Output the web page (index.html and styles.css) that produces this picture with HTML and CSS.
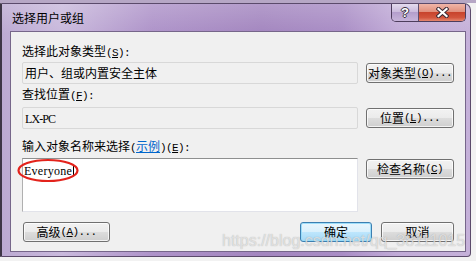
FILE: index.html
```html
<!DOCTYPE html>
<html lang="zh-CN">
<head>
<meta charset="utf-8">
<title>选择用户或组</title>
<link rel="stylesheet" href="styles.css">
</head>
<body>
<div class="window">
  <div class="titlebar">
    <div class="title">选择用户或组</div>
    <div class="caption">
      <div class="cb help"><span class="q">?</span></div>
      <div class="cb close">
        <svg width="13" height="11" viewBox="0 0 13 11">
          <path d="M2.5 2 L10.5 9 M10.5 2 L2.5 9" stroke="#3a2a36" stroke-width="4.2" stroke-linecap="square" fill="none"/>
          <path d="M2.5 2 L10.5 9 M10.5 2 L2.5 9" stroke="#ffffff" stroke-width="2.2" stroke-linecap="square" fill="none"/>
        </svg>
      </div>
    </div>
  </div>
  <div class="client">
    <div class="label">选择此对象类型<span class="h">(<u>S</u>):</span></div>
    <div class="row first">
      <div class="field ro">用户、组或内置安全主体</div>
      <div class="btn">对象类型<span class="h">(<u>O</u>)...</span></div>
    </div>
    <div class="label l2">查找位置<span class="h">(<u>F</u>):</span></div>
    <div class="row r2">
      <div class="field ro"><span class="mono pc">LX-PC</span></div>
      <div class="btn">位置<span class="h">(<u>L</u>)...</span></div>
    </div>
    <div class="label l3">输入对象名称来选择<span class="h">(</span><span class="link">示例</span><span class="h">)(<u>E</u>):</span></div>
    <div class="row r3">
      <div class="field edit"><span class="mono ev">Everyone</span><span class="caret"></span>
        <svg class="mark" width="66" height="28" viewBox="0 0 66 28">
          <ellipse cx="32" cy="13.5" rx="29.5" ry="10.5" fill="none" stroke="#e3231c" stroke-width="2.2"/>
        </svg>
      </div>
      <div class="btn">检查名称<span class="h">(<u>C</u>)</span></div>
    </div>
    <div class="bottom">
      <div class="btn adv">高级<span class="h">(<u>A</u>)...</span></div>
      <div class="btn ok">确定</div>
      <div class="btn cancel">取消</div>
    </div>
  </div>
</div>
<div class="watermark">https://blog.csdn.net/qq_38111015</div>
</body>
</html>
```

FILE: styles.css
```css
* { box-sizing: border-box; margin: 0; padding: 0; }
html, body { width: 476px; height: 261px; overflow: hidden; }
body {
  position: relative;
  padding-top: 3px;
  background: linear-gradient(#b6a7c5 0, #b6a7c5 3px, #f2f2f2 3px);
  font-family: "Noto Sans CJK SC", sans-serif;
  font-size: 12px;
  color: #000;
}
.window {
  width: 471px;
  height: 254px;
  border: 1px solid #5b4b6b;
  border-left: 2px solid #3e3646;
  border-radius: 0 7px 4px 0;
  background:
    linear-gradient(rgba(255,255,255,0.18), rgba(255,255,255,0) 30px),
    linear-gradient(90deg, #bcaad2 0, #c9b9dc 60px, #ae93c9 150px, #a386bf 260px, #a98dc5 340px, #c1abd7 395px, #c5b1d9 471px);
  padding: 0 4px 4px 8px;
  display: flex;
  flex-direction: column;
}
.titlebar {
  height: 27px;
  position: relative;
  padding: 7px 0 0 2px;
}
.title { font-size: 12px; line-height: 14px; color: #000; }
.caption {
  position: absolute;
  top: 0;
  right: 0;
  display: flex;
  height: 18px;
  border: 1px solid #4d3d5c;
  border-top: none;
  border-radius: 0 0 5px 5px;
  overflow: hidden;
}
.cb { display: flex; align-items: center; justify-content: center; height: 100%; }
.help {
  width: 27px;
  border-right: 1px solid #5d4d6c;
  background: linear-gradient(#e4dbee, #cbbbdd 45%, #b49ecc 50%, #c7b4da);
}
.q {
  font-family: "Liberation Sans", sans-serif;
  font-weight: bold;
  font-size: 13px;
  line-height: 13px;
  color: #fff;
  text-shadow: 1px 0 0 #3a3040, -1px 0 0 #3a3040, 0 1px 0 #3a3040, 0 -1px 0 #3a3040;
}
.close {
  width: 46px;
  background: linear-gradient(#f0b5a8, #e1907d 45%, #c8442d 50%, #d2553d 80%, #e5876f);
}
.client {
  flex: 1;
  border: 1px solid #76668a;
  background: #f0f0f0;
  padding: 12px 11px 0 11px;
  display: flex;
  flex-direction: column;
}
.label { height: 14px; line-height: 14px; white-space: nowrap; }
.l2 { margin-top: 3px; }
.l3 { margin-top: 10px; }
.h {
  font-family: "Liberation Mono", monospace;
  font-size: 11px;
  letter-spacing: -0.6px;
}
.link { color: #0066cc; text-decoration: underline; }
.row { display: flex; gap: 8px; align-items: flex-start; margin-top: 4px; }
.r2 { margin-top: 6px; }
.r3 { margin-top: 5px; }
.field {
  width: 336px;
  height: 22px;
  line-height: 20px;
  padding-left: 2px;
  white-space: nowrap;
}
.ro {
  border: 1px solid #d8d8d8;
  border-radius: 2px;
  background: #f0f0f0;
}
.edit {
  position: relative;
  height: 54px;
  background: #fff;
  border: 1px solid #e2e3ea;
  border-top-color: #8e8f8f;
  border-left-color: #b0b0b0;
  line-height: 14px;
  padding-top: 4px;
  padding-left: 1px;
}
.mono {
  font-family: "Liberation Serif", serif;
  font-size: 12px;
}
.ev { letter-spacing: 0.25px; }
.pc { letter-spacing: -0.9px; }
.caret {
  display: inline-block;
  width: 1px;
  height: 10px;
  background: #000;
  vertical-align: -1px;
  margin-left: 1px;
}
.mark { position: absolute; left: -7px; top: -2px; }
.btn {
  width: 88px;
  height: 20px;
  margin-top: 1px;
  border: 1px solid #707070;
  border-radius: 3px;
  background: linear-gradient(#f2f2f2, #ebebeb 50%, #dddddd 50%, #cfcfcf);
  box-shadow: inset 0 0 0 1px rgba(255,255,255,0.75);
  display: flex;
  align-items: center;
  justify-content: center;
  line-height: 14px;
  white-space: nowrap;
}
.bottom { display: flex; margin-top: 10px; }
.bottom .btn { margin-top: 0; }
.adv { width: 87px; margin-left: 1px; }
.ok {
  width: 72px;
  margin-left: auto;
  border-color: #3c7fb1;
  background: linear-gradient(#eaf6fd, #d9f0fc 50%, #bee6fd 50%, #a7d9f5);
  box-shadow: inset 0 0 0 1px rgba(150,220,250,0.9);
}
.cancel { width: 73px; margin-left: 9px; }
.watermark {
  position: absolute;
  left: 222px;
  top: 232px;
  font-family: "Liberation Sans", sans-serif;
  font-size: 16px;
  line-height: 18px;
  white-space: nowrap;
  color: rgba(238,238,238,0.75);
  text-shadow: 0 0 1px rgba(90,90,90,0.45);
}
```
